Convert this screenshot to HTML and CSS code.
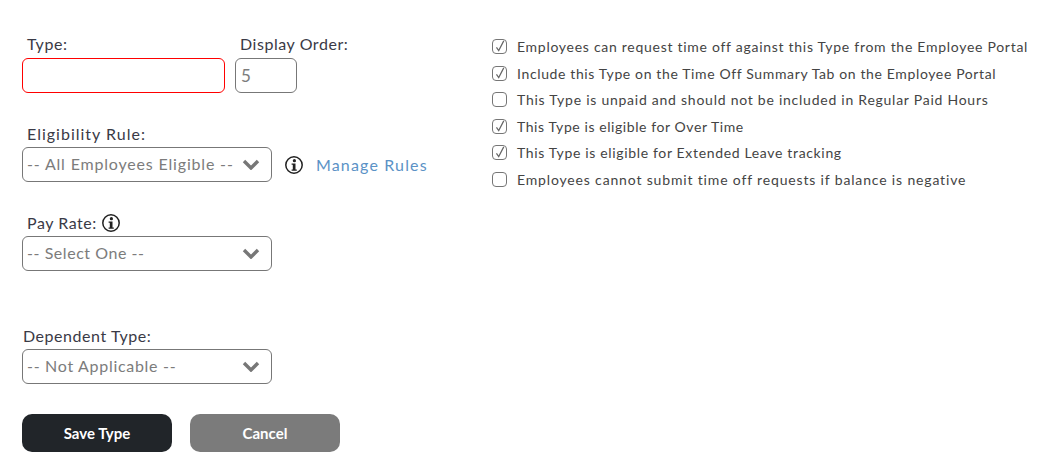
FILE: index.html
```html
<!DOCTYPE html>
<html lang="en">
<head>
  <meta charset="UTF-8">
  <title>Time Off Type</title>
  <link rel="stylesheet" href="styles.css">
</head>
<body>
  <div class="page">
    <form class="left">
      <div class="row top-row">
        <div class="field type-field">
          <label class="lbl">Type:</label>
          <input type="text" class="box invalid type-input">
        </div>
        <div class="field order-field">
          <label class="lbl">Display Order:</label>
          <input type="text" class="box order-input" value="5">
        </div>
      </div>

      <div class="field rule-field">
        <label class="lbl rule-lbl">Eligibility Rule:</label>
        <div class="row rule-row">
          <div class="box select all-opt"><span>-- All Employees Eligible --</span>
            <svg class="chev" viewBox="0 0 18 11"><path d="M2 2l7 7 7-7" fill="none" stroke="#777" stroke-width="3.4"/></svg>
          </div>
          <svg class="info rule-info" viewBox="0 0 20 20">
            <circle cx="10" cy="10" r="8.2" fill="none" stroke="#222" stroke-width="1.5"/>
            <circle cx="10.4" cy="5.7" r="1.6" fill="#222"/>
            <path d="M7.6 8.6h3.9v6h1.3v1.2H7.6v-1.2h1.2V9.8H7.6z" fill="#222"/>
          </svg>
          <a class="manage" href="#">Manage Rules</a>
        </div>
      </div>

      <div class="field pay-field">
        <label class="lbl">Pay Rate:
          <svg class="info pay-info" viewBox="0 0 20 20">
            <circle cx="10" cy="10" r="8.2" fill="none" stroke="#222" stroke-width="1.5"/>
            <circle cx="10.4" cy="5.7" r="1.6" fill="#222"/>
            <path d="M7.6 8.6h3.9v6h1.3v1.2H7.6v-1.2h1.2V9.8H7.6z" fill="#222"/>
          </svg>
        </label>
        <div class="box select one-opt"><span>-- Select One --</span>
          <svg class="chev" viewBox="0 0 18 11"><path d="M2 2l7 7 7-7" fill="none" stroke="#777" stroke-width="3.4"/></svg>
        </div>
      </div>

      <div class="field dep-field">
        <label class="lbl dep-lbl">Dependent Type:</label>
        <div class="box select na-opt"><span>-- Not Applicable --</span>
          <svg class="chev" viewBox="0 0 18 11"><path d="M2 2l7 7 7-7" fill="none" stroke="#777" stroke-width="3.4"/></svg>
        </div>
      </div>

      <div class="row buttons">
        <button type="button" class="btn save">Save Type</button>
        <button type="button" class="btn cancel">Cancel</button>
      </div>
    </form>

    <div class="right">
      <div class="check"><span class="cb on"><svg viewBox="0 0 15 15"><path d="M4 8.5l2.6 3.6L12.4 1" fill="none" stroke="#666" stroke-width="1.4"/></svg></span>Employees can request time off against this Type from the Employee Portal</div>
      <div class="check row-two"><span class="cb on"><svg viewBox="0 0 15 15"><path d="M4 8.5l2.6 3.6L12.4 1" fill="none" stroke="#666" stroke-width="1.4"/></svg></span>Include this Type on the Time Off Summary Tab on the Employee Portal</div>
      <div class="check row-three"><span class="cb"></span>This Type is unpaid and should not be included in Regular Paid Hours</div>
      <div class="check row-four"><span class="cb on"><svg viewBox="0 0 15 15"><path d="M4 8.5l2.6 3.6L12.4 1" fill="none" stroke="#666" stroke-width="1.4"/></svg></span>This Type is eligible for Over Time</div>
      <div class="check row-five"><span class="cb on"><svg viewBox="0 0 15 15"><path d="M4 8.5l2.6 3.6L12.4 1" fill="none" stroke="#666" stroke-width="1.4"/></svg></span>This Type is eligible for Extended Leave tracking</div>
      <div class="check row-six"><span class="cb"></span>Employees cannot submit time off requests if balance is negative</div>
    </div>
  </div>
</body>
</html>
```

FILE: styles.css
```css
body {
  margin: 0;
  background: #fff;
  font-family: "Lato", sans-serif;
  color: #333;
}
.page {
  display: flex;
  padding: 33px 0 0 22px;
}
.left {
  width: 470px;
}
.row {
  display: flex;
}
.lbl {
  display: block;
  height: 24px;
  padding-left: 5px;
  font-size: 16px;
  line-height: 22px;
  letter-spacing: 0.55px;
  color: #3a3a46;
}
.top-row .lbl {
  height: 25px;
}
.rule-lbl {
  letter-spacing: 1px;
}
.box {
  box-sizing: border-box;
  height: 35px;
  border: 1px solid #777;
  border-radius: 6px;
  background: #fff;
  font-family: "Lato", sans-serif;
  font-size: 16px;
  letter-spacing: 0.75px;
  color: #7c7c7c;
  padding: 0 4px;
}
.invalid {
  border-color: #f00;
}
.type-input {
  width: 203px;
  display: block;
}
.order-input {
  width: 62px;
  display: block;
  padding-left: 5px;
  font-size: 17px;
}
.order-field {
  margin-left: 10px;
}
.select {
  width: 250px;
  display: flex;
  align-items: center;
  justify-content: space-between;
}
.select span {
  margin-bottom: 2px;
}
.all-opt {
  letter-spacing: 0.82px;
}
.one-opt {
  letter-spacing: 0.55px;
}
.na-opt {
  letter-spacing: 0.7px;
}
.chev {
  width: 18px;
  height: 11px;
  margin-right: 7px;
  flex: none;
}
.rule-field {
  margin-top: 30px;
}
.rule-row {
  align-items: center;
}
.info {
  width: 20px;
  height: 20px;
}
.rule-info {
  margin-left: 12px;
}
.manage {
  margin-left: 12px;
  margin-bottom: 1px;
  font-size: 16px;
  letter-spacing: 1.15px;
  color: #5b92c6;
  text-decoration: none;
}
.pay-field {
  margin-top: 30px;
}
.pay-info {
  margin-left: -1px;
  vertical-align: -4px;
}
.dep-field {
  margin-top: 54px;
}
.dep-lbl {
  padding-left: 1px;
}
.buttons {
  margin-top: 30px;
  gap: 18px;
}
.btn {
  width: 150px;
  height: 38px;
  border: none;
  border-radius: 10px;
  font-family: "Lato", sans-serif;
  font-size: 15px;
  font-weight: 700;
  color: #fff;
}
.save {
  background: #212529;
}
.cancel {
  background: #7b7b7b;
}
.right {
  padding-top: 0.5px;
}
.check {
  display: flex;
  align-items: center;
  height: 26.5px;
  font-size: 14px;
  letter-spacing: 0.72px;
  color: #444;
  white-space: nowrap;
}
.row-two {
  letter-spacing: 0.63px;
}
.row-three {
  letter-spacing: 0.75px;
}
.row-four {
  letter-spacing: 0.58px;
}
.row-five {
  letter-spacing: 0.66px;
}
.row-six {
  letter-spacing: 0.84px;
}
.cb {
  box-sizing: border-box;
  width: 15px;
  height: 15px;
  margin-right: 10px;
  border: 1px solid #767676;
  border-radius: 4px;
  flex: none;
}
.cb svg {
  display: block;
  width: 13px;
  height: 13px;
  overflow: visible;
}
```
